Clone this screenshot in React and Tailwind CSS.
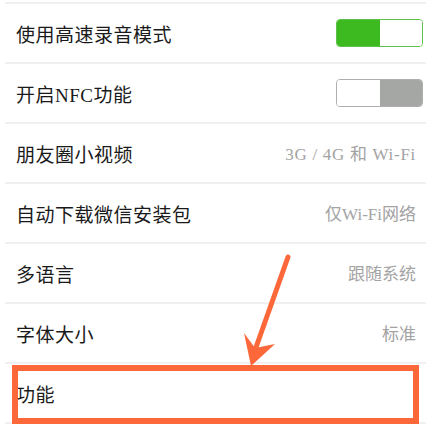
import React from "react";

const font = { fontFamily: '"Liberation Serif", "Noto Sans CJK SC", serif' };

function Toggle({ on }) {
  if (on) {
    return (
      <div className="flex w-[87px] h-[28px] rounded-[4px] border-[1.5px] border-[#5fc04a] overflow-hidden mr-[3px]">
        <div className="w-1/2 bg-[#3dba1f]" />
        <div className="w-1/2 bg-white" />
      </div>
    );
  }
  return (
    <div className="flex w-[87px] h-[28px] rounded-[4px] border-[1.5px] border-[#adaead] overflow-hidden mr-[3px]">
      <div className="w-1/2 bg-white" />
      <div className="w-1/2 bg-[#a5a7a4]" />
    </div>
  );
}

function Row({ label, value, toggle, wide }) {
  return (
    <div className="flex items-center justify-between h-[60px] border-t-2 border-[#f0f0f0] ml-[5px] mr-[10px]">
      <span className="pl-[11px] pt-[5px] text-[19px] text-[#1a1a1a] tracking-[0.5px] leading-none">{label}</span>
      {toggle !== undefined ? (
        <Toggle on={toggle} />
      ) : value ? (
        <span
          className={
            wide
              ? "pr-[10px] pt-[3px] text-[17px] text-[#a3a3a3] leading-none tracking-[0.7px]"
              : "pr-[10px] pt-[3px] text-[17px] text-[#a3a3a3] leading-none"
          }
        >
          {value}
        </span>
      ) : null}
    </div>
  );
}

export default function App() {
  return (
    <div className="relative w-[436px] h-[445px] overflow-hidden bg-white" style={font}>
      <div className="pt-[2px]">
        <Row label="使用高速录音模式" toggle={true} />
        <Row label="开启NFC功能" toggle={false} />
        <Row label="朋友圈小视频" value="3G / 4G 和 Wi-Fi" wide />
        <Row label="自动下载微信安装包" value="仅Wi-Fi网络" />
        <Row label="多语言" value="跟随系统" />
        <Row label="字体大小" value="标准" />
        <Row label="功能" />
        <Row label="聊天记录迁移" />
      </div>
      <div className="absolute left-[12px] top-[365px] w-[407px] h-[59px] border-[6px] border-[#fd683a]" />
      <svg className="absolute left-0 top-0 pointer-events-none" width="436" height="445" viewBox="0 0 436 445">
        <line x1="288" y1="257" x2="254" y2="353" stroke="#fd683a" strokeWidth="5" strokeLinecap="round" />
        <polygon points="251,366 244,333 255,348 275,344" fill="#fd683a" />
      </svg>
    </div>
  );
}
